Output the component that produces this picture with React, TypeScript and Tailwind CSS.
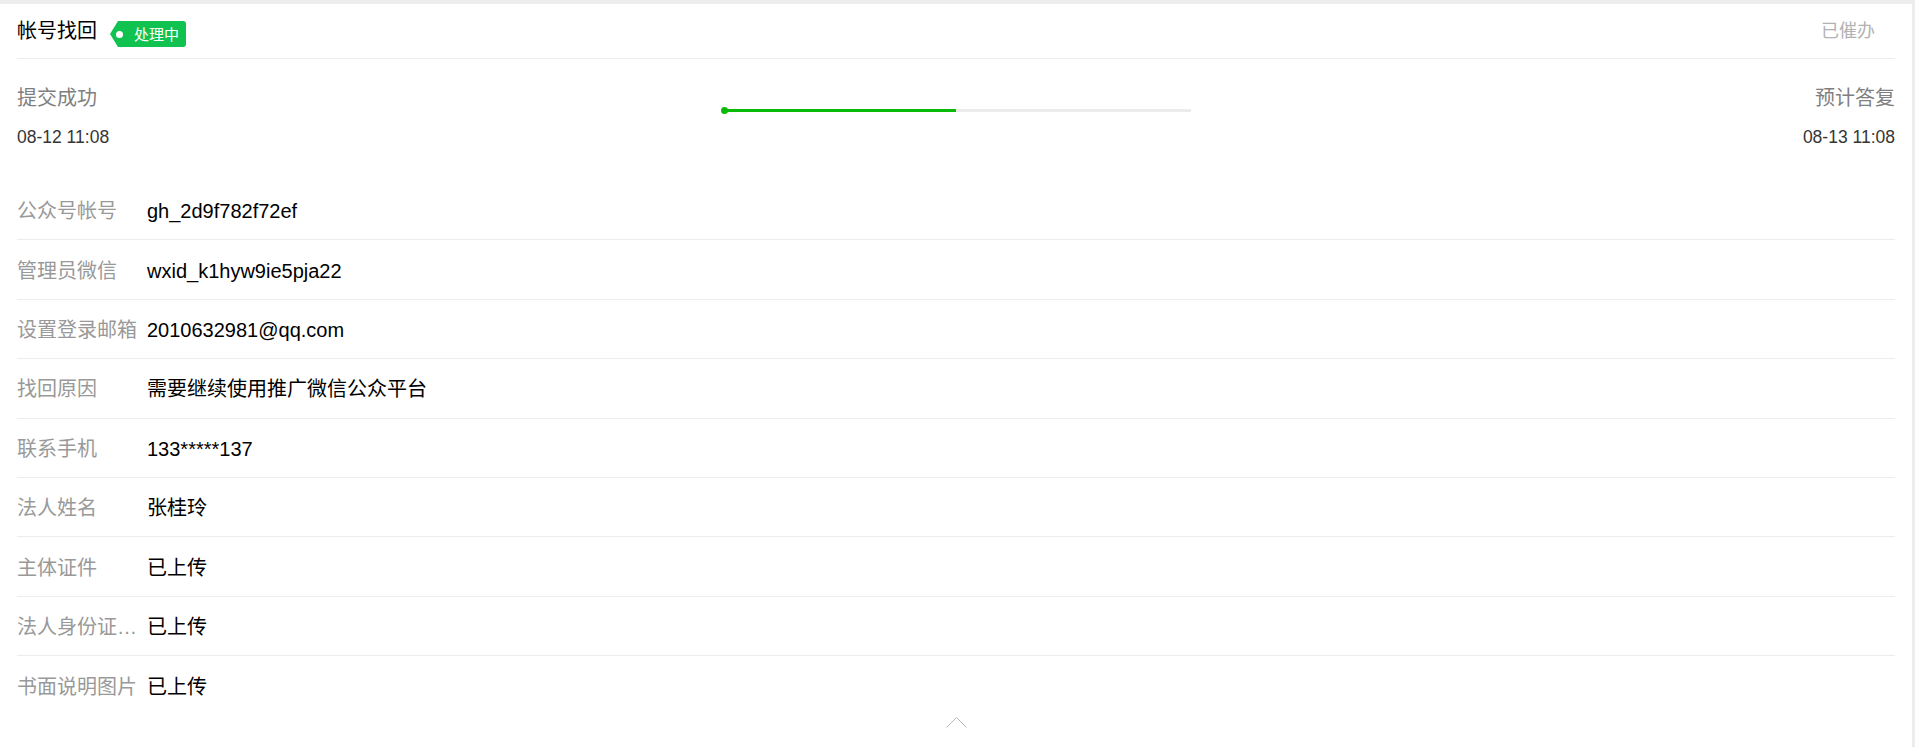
import React from "react";

const rows: { label: string; value: string }[] = [
  { label: "公众号帐号", value: "gh_2d9f782f72ef" },
  { label: "管理员微信", value: "wxid_k1hyw9ie5pja22" },
  { label: "设置登录邮箱", value: "2010632981@qq.com" },
  { label: "找回原因", value: "需要继续使用推广微信公众平台" },
  { label: "联系手机", value: "133*****137" },
  { label: "法人姓名", value: "张桂玲" },
  { label: "主体证件", value: "已上传" },
  { label: "法人身份证正反面", value: "已上传" },
  { label: "书面说明图片", value: "已上传" },
];

export default function App() {
  return (
    <div
      className="h-[747px] overflow-hidden bg-[#ededed] pt-[4px] pr-[3px]"
      style={{ fontFamily: '"Liberation Sans", Arial, "Noto Sans CJK SC", sans-serif' }}
    >
      <div className="h-full bg-white px-[17px]">
        {/* header */}
        <div className="flex h-[55px] items-center border-b border-[#ececec]">
          <span className="text-[20px] leading-none text-black">帐号找回</span>
          <div className="ml-[13px] mt-[6px] flex h-[26px] w-[76px] items-center rounded-r-[3px] bg-[#10c24f] [clip-path:polygon(8px_0,100%_0,100%_100%,8px_100%,0_50%)]">
            <span className="ml-[6px] h-[7px] w-[7px] rounded-full bg-white" />
            <span className="ml-[11px] text-[15px] leading-none text-white">处理中</span>
          </div>
          <span className="ml-auto mr-[20px] text-[18px] leading-none text-[#b2b2b2]">已催办</span>
        </div>

        {/* progress */}
        <div className="grid h-[122px] grid-cols-[1fr_469px_1fr]">
          <div className="pt-[29px]">
            <div className="text-[20px] leading-none text-[#7f7f7f]">提交成功</div>
            <div className="mt-[21px] text-[17.5px] leading-none text-[#353535]">08-12 11:08</div>
          </div>
          <div className="pt-[50px]">
            <div className="relative h-[3px] w-full bg-[#ebebeb]">
              <div className="absolute left-0 top-0 h-[3px] w-1/2 bg-[#09bb07]" />
              <div className="absolute left-[-1px] top-[-2px] h-[7px] w-[7px] rounded-full bg-[#09bb07]" />
            </div>
          </div>
          <div className="flex flex-col items-end pt-[29px]">
            <div className="text-[20px] leading-none text-[#7f7f7f]">预计答复</div>
            <div className="mt-[21px] text-[17.5px] leading-none text-[#353535]">08-13 11:08</div>
          </div>
        </div>

        {/* rows */}
        <div>
          {rows.map((r, i) => (
            <div
              key={r.label}
              className={`flex h-[59.4px] items-center pt-[2px] ${
                i < rows.length - 1 ? "border-b border-[#ececec]" : ""
              }`}
            >
              <span className="w-[122px] shrink-0 truncate text-[20px] leading-[24px] text-[#999999]">
                {r.label}
              </span>
              <span className="ml-[8px] text-[20px] leading-[24px] text-black">{r.value}</span>
            </div>
          ))}
        </div>

        <div className="flex justify-center pt-[1px]">
          <svg width="21" height="11" viewBox="0 0 21 11">
            <polyline points="0.5,10.5 10.5,0.5 20.5,10.5" fill="none" stroke="#b8b8b8" strokeWidth="1" />
          </svg>
        </div>
      </div>
    </div>
  );
}
